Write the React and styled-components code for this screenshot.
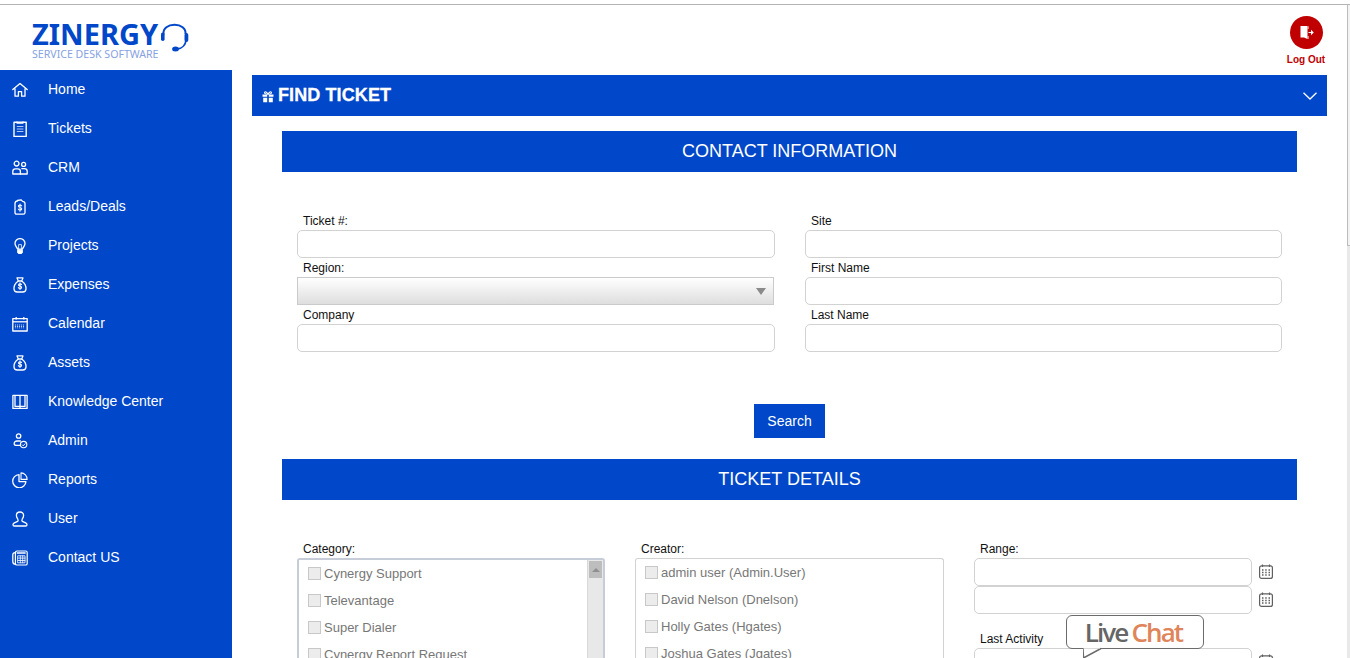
import React from "react";
import styled, { createGlobalStyle } from "styled-components";

const BLUE = "#0047c9";

const Global = createGlobalStyle`
  html, body { margin: 0; padding: 0; background: #fff; overflow: hidden; }
  body { font-family: "Liberation Sans", Arial, sans-serif; }
  * { box-sizing: border-box; }
`;

const Page = styled.div`
  position: relative;
  width: 1350px;
  height: 658px;
  overflow: hidden;
  background: #fff;
  padding-top: 4px;
`;
const TopRule = styled.div`height: 1px; background: #b4b4b4;`;
const ScrollTrack = styled.div`
  position: absolute; right: 0; top: 5px; bottom: 0; width: 3px;
  background: #e9e9e9;
`;
const ScrollThumb = styled.div`
  height: 241px;
  background: #f3f3f3;
  border-left: 1px solid #bcbcbc;
  border-bottom: 1px solid #bcbcbc;
`;
const Header = styled.header`
  height: 65px;
  display: flex;
  justify-content: space-between;
  padding: 0 24px 0 32px;
`;
const Logo = styled.div`
  padding-top: 15px;
  display: flex;
  flex-direction: column;
  width: 160px;
`;
const LogoName = styled.div`
  display: flex; align-items: flex-start; gap: 2px;
  font: 700 29px/28px "Noto Sans", sans-serif;
  color: ${BLUE};
  height: 28px;
`;
const LogoSub = styled.div`
  font: 400 10.6px/12px "Noto Sans", sans-serif;
  color: #86a2e2;
  white-space: nowrap;
`;
const LogoutBox = styled.div`
  width: 40px;
  display: flex; flex-direction: column; align-items: center;
  padding-top: 11px;
  gap: 5px;
  color: #c00000;
  font: 700 10px/12px "Liberation Sans", sans-serif;
  white-space: nowrap;
`;
const LogoutCircle = styled.div`
  width: 33px; height: 33px; border-radius: 50%;
  background: #c00000;
  display: flex; align-items: center; justify-content: center;
`;
const Body = styled.div`display: flex; height: 588px;`;
const Sidebar = styled.nav`
  width: 232px;
  flex: none;
  background: ${BLUE};
`;
const NavItem = styled.div`
  height: 39px;
  display: flex;
  align-items: center;
  padding-left: 12px;
  gap: 20px;
  color: #fff;
  font-size: 14px;
  line-height: 39px;
  svg { flex: none; width: 16px; height: 16px; display: block; }
`;
const Main = styled.main`
  flex: 1;
  padding: 5px 23px 0 20px;
`;
const FindBar = styled.div`
  height: 41px;
  background: ${BLUE};
  color: #fff;
  display: flex;
  align-items: center;
  padding: 0 10px;
  font-size: 18px;
  font-weight: 700;
  gap: 4px;
`;
const FindTitle = styled.span`
  flex: 1;
  letter-spacing: 0.1px;
  -webkit-text-stroke: 0.3px #fff;
`;
const Section = styled.section`margin: 15px 30px 0 30px;`;
const SectionBar = styled.div`
  height: 41px;
  background: ${BLUE};
  color: #fff;
  font-size: 18px;
  line-height: 40px;
  text-align: center;
`;
const FormGrid = styled.div`
  display: grid;
  grid-template-columns: 478px 477px;
  column-gap: 30px;
  padding: 39px 15px 0;
`;
const Field = styled.div`display: flex; flex-direction: column;`;
const Label = styled.label`
  height: 19px;
  padding: 1px 0 0 6px;
  font-size: 12px;
  line-height: 18px;
  color: #111;
  white-space: nowrap;
`;
const Input = styled.div`
  height: 28px;
  flex: none;
  width: ${p => p.$w || "100%"};
  background: #fff;
  border: 1px solid #d2d2d2;
  border-radius: 5px;
`;
const Select = styled.div`
  height: 28px;
  width: 477px;
  border: 1px solid #cacaca;
  background: linear-gradient(#ffffff, #dedede);
  display: flex; align-items: center; justify-content: flex-end;
  padding-right: 7px;
`;
const Caret = styled.div`
  width: 0; height: 0;
  border-left: 5.5px solid transparent;
  border-right: 5.5px solid transparent;
  border-top: 7px solid #8a8a8a;
`;
const Actions = styled.div`display: flex; justify-content: center; padding-top: 52px;`;
const Button = styled.button`
  width: 71px; height: 34px;
  border: 0; padding: 0;
  background: ${BLUE};
  color: #fff;
  font: 400 14px "Liberation Sans", sans-serif;
`;
const DetailSection = styled(Section)`margin-top: 21px;`;
const DetailGrid = styled.div`
  display: grid;
  grid-template-columns: 308px 309px 292px;
  column-gap: 30px;
  padding: 39px 15px 0;
`;
const ListBox = styled.div`
  height: 110px;
  display: flex;
  border: ${p => p.$heavy ? "2px solid #c6ccd8" : "1px solid #d2d2d2"};
  border-bottom: 0;
  border-radius: 3px 3px 0 0;
  background: #fff;
  overflow: hidden;
`;
const ListItems = styled.div`
  flex: 1;
  display: flex;
  flex-direction: column;
  gap: 1px;
  padding-left: 9px;
`;
const ListRow = styled.div`
  height: 26px;
  flex: none;
  display: flex;
  align-items: center;
  gap: 3px;
  font-size: 13px;
  color: #777;
  white-space: nowrap;
`;
const Check = styled.span`
  width: 13px; height: 13px; flex: none;
  background: #ececec;
  border: 1px solid #c8c8c8;
`;
const Track = styled.div`
  width: 16px;
  flex: none;
  background: #e8e8e8;
  border-left: 1px solid #d8d8d8;
  padding: 1px 1px 0 1px;
`;
const Thumb = styled.div`
  height: 17px;
  background: #bdbdbd;
  display: flex; align-items: center; justify-content: center;
  &::before {
    content: "";
    width: 0; height: 0;
    border-left: 4px solid transparent;
    border-right: 4px solid transparent;
    border-bottom: 4px solid #8f8f8f;
  }
`;
const DateRow = styled.div`
  display: flex; align-items: center; gap: 7px;
  svg { flex: none; margin-top: -2px; }
`;
const DateLabel = styled(Label)`margin-top: 15px;`;
const LiveChat = styled.div`
  position: absolute;
  left: 1066px;
  top: 615px;
  width: 138px;
  height: 34px;
  background: #fff;
  border: 1.5px solid #6b6b6b;
  border-radius: 6px;
  display: flex;
  align-items: center;
  justify-content: center;
  padding-right: 3px;
  font: 600 26px/30px "Open Sans", sans-serif;
  letter-spacing: -1.9px;
  color: #666;
`;
const ChatWord = styled.span`color: #e0845a; margin-left: 4px;`;
const Tail = styled.svg`position: absolute; left: 16px; top: 31px;`;

const S = { fill: "none", stroke: "#fff", strokeWidth: 1.3, strokeLinecap: "round", strokeLinejoin: "round" };

const icons = {
  home: <svg viewBox="0 0 16 16" {...S}><path d="M.8 7.6 8 1.6l7.2 6M3 6.400v7.800h3.400V9.600h3.200v4.600H13V6.400" /></svg>,
  tickets: <svg viewBox="0 0 16 16" {...S} strokeLinecap="butt"><rect x="2" y="1.200" width="12.200" height="14.300" strokeWidth="1.400" /><path d="M5 .6v1.400h6V.6" /><path d="M4.800 5.500h6.600M4.800 8h6.600M4.800 10.500h6.600" strokeWidth="1.100" opacity=".7" /></svg>,
  crm: <svg viewBox="0 0 16 16" {...S}><circle cx="4.600" cy="3.600" r="2.400" /><circle cx="11.600" cy="4.400" r="2" /><path d="M.8 14v-2.600c0-1.600 1-2.600 2.600-2.600h2.400c1.600 0 2.600 1 2.600 2.600V14z" /><path d="M9.800 8.600h2.400c1.800 0 3 1 3 2.600V14H8.400" /></svg>,
  leads: <svg viewBox="0 0 16 16" {...S}><path d="M5.400 1.500 9 .8l1.600 1.600c1.600.2 2.400 1 2.400 2.200v9c0 1-.6 1.600-1.600 1.600H4.600c-1 0-1.600-.6-1.600-1.600v-9c0-1.400.8-2.400 2.400-2.600z" strokeWidth="1.300" /><path d="M9.600 6.900C9.300 6.200 8.700 6 8 6c-1 0-1.600.5-1.600 1.200 0 1.700 3.300.9 3.300 2.600 0 .8-.7 1.300-1.700 1.300-.8 0-1.400-.3-1.700-1M8 5v7.200" strokeWidth="1.100" /></svg>,
  bulb: <svg viewBox="0 0 16 16" {...S}><path d="M5.600 11.200C5.400 9.400 3 8.600 3 5.600a5 5 0 0 1 10 0c0 3-2.400 3.800-2.600 5.600z" /><path d="M6.600 11V6.600h2.800V11" strokeWidth=".8" /><path d="M5.800 12.200h4.400v2.200l-1 1H6.800l-1-1z" fill="#fff" /></svg>,
  bag: <svg viewBox="0 0 16 16" {...S}><path d="M5 .9h6L9.800 3.800H6.200zM6 4.100h4" strokeWidth="1.200" /><path d="M6 4.200C3.600 6 1.800 9.200 2 12c.1 1.800 1.400 3 3.200 3h5.600c1.800 0 3.100-1.200 3.200-3 .2-2.800-1.600-6-4-7.800" /><path d="M9.500 7.600C9.200 7 8.700 6.800 8 6.800c-.9 0-1.500.5-1.500 1.100 0 1.600 3.100.8 3.100 2.500 0 .7-.7 1.100-1.600 1.100-.8 0-1.400-.3-1.600-.9M8 5.800v6.700" strokeWidth="1.100" /></svg>,
  calendar: <svg viewBox="0 0 16 16" {...S} strokeLinecap="butt"><rect x=".8" y="2.600" width="14.400" height="12.400" /><path d="M.8 5.800h14.400" /><path d="M4.200 1v2.400M11.800 1v2.400" /><path d="M3.500 8.400v3.800M5.500 8.400v3.800M7.500 8.400v3.800M9.500 8.400v3.800M11.500 8.400v3.800" strokeWidth="1.100" opacity=".75" strokeDasharray="1 .5" /></svg>,
  book: <svg viewBox="0 0 16 16" {...S} strokeLinecap="butt"><path d="M.9 1.400h14.200v13H.9z" /><path d="M3 1.400v11h4.900M13 1.400v11H8.100M8 1.400v13" /></svg>,
  admin: <svg viewBox="0 0 16 16" {...S}><circle cx="6.600" cy="3" r="2.200" /><path d="M8.400 8H5c-1.700 0-2.800 1-2.800 2.400 0 1.200.8 2 2.200 2H8" /><circle cx="11.600" cy="11.600" r="3.200" strokeWidth="1.100" /><path d="m10.200 11.800 1 1 1.800-2" strokeWidth="1" /></svg>,
  pie: <svg viewBox="0 0 16 16" {...S}><path d="M7 2.600a6.600 6.600 0 1 0 6.900 7H7z" /><path d="M9 .9a6.200 6.200 0 0 1 6.100 6.500H9z" strokeWidth="1.100" /></svg>,
  user: <svg viewBox="0 0 16 16" {...S}><path d="M8 1C5.800 1 4.400 2.400 4.400 4.400c0 1.700.8 2.900 1.400 3.800.4.700.4 1.700-.2 2.200l-3.200 1.400C1.400 12.300 1 13 1 13.800c0 .8.600 1.200 1.400 1.200h11.200c.8 0 1.400-.4 1.400-1.200s-.4-1.500-1.400-2l-3.200-1.400c-.6-.5-.6-1.500-.2-2.200.6-.9 1.400-2.100 1.400-3.800C11.600 2.400 10.200 1 8 1z" /></svg>,
  phone: <svg viewBox="0 0 16 16" {...S}><rect x="3.400" y="1" width="11.800" height="14" rx="1.600" strokeWidth="1.200" /><path d="M3.400 2.600C1.400 2.600.800 3.400.800 5v6.400c0 1.800.800 2.800 2.600 2.800" /><path d="M5.200 3h8" strokeWidth="1.300" /><path d="M6 5.800h7v7H6zM8.300 5.800v7M10.700 5.800v7M6 8.100h7M6 10.500h7" strokeWidth=".8" /></svg>,
};

const nav = [
  ["Home", "home"], ["Tickets", "tickets"], ["CRM", "crm"], ["Leads/Deals", "leads"],
  ["Projects", "bulb"], ["Expenses", "bag"], ["Calendar", "calendar"], ["Assets", "bag"],
  ["Knowledge Center", "book"], ["Admin", "admin"], ["Reports", "pie"], ["User", "user"],
  ["Contact US", "phone"],
];

const CalendarIcon = () => (
  <svg width="14" height="15" viewBox="0 0 14 15" fill="none" stroke="#5f5f5f" strokeWidth="1.200">
    <rect x=".6" y="1.800" width="12.800" height="12.600" rx="2" />
    <path d="M3.500.500v2.500M10.500.500v2.500" />
    <path d="M3 6h1.500M6.200 6h1.500M9.500 6H11M3 8.500h1.500M6.200 8.500h1.500M9.500 8.500H11M3 11h1.500M6.200 11h1.500M9.500 11H11" strokeWidth="1.600" />
  </svg>
);

const Headset = () => (
  <svg width="30" height="30" viewBox="0 0 30 30" fill="none" stroke="#0047c9" style={{ marginTop: 3, overflow: "visible" }}>
    <path d="M3.500 11C3 5.500 8 1.800 14.500 1.800S26 5.500 25.500 11" strokeWidth="2" />
    <path d="M26 17c-.3 4.500-3.500 8.500-9 9" strokeWidth="1.800" />
    <rect x="1" y="9.500" width="3.600" height="8.500" rx="1.800" fill="#0047c9" stroke="none" />
    <rect x="24.500" y="10" width="3.800" height="9" rx="1.900" fill="#0047c9" stroke="none" />
    <ellipse cx="15.500" cy="26" rx="3.400" ry="2.500" fill="#0047c9" stroke="none" />
  </svg>
);

const Gift = () => (
  <svg width="12" height="12" viewBox="0 0 12 12" fill="#fff" style={{ marginTop: 2 }}>
    <path d="M.5 3.500h4.700v2.300H.5zM6.800 3.500h4.700v2.300H6.800zM1.200 6.700h4v4.600h-4zM6.800 6.700h4v4.600h-4z" />
    <path d="M6 3.300C4.800.6 3.200.3 2.700 1.200c-.5 1 .8 2.100 3.300 2.100zm0 0c1.200-2.700 2.800-3 3.300-2.100.5 1-.8 2.100-3.300 2.100z" fill="none" stroke="#fff" strokeWidth="1.100" />
  </svg>
);

const categories = ["Cynergy Support", "Televantage", "Super Dialer", "Cynergy Report Request"];
const creators = ["admin user (Admin.User)", "David Nelson (Dnelson)", "Holly Gates (Hgates)", "Joshua Gates (Jgates)"];

export default function App() {
  return (
    <Page>
      <Global />
      <TopRule />
      <Header>
        <Logo>
          <LogoName>ZINERGY<Headset /></LogoName>
          <LogoSub>SERVICE DESK SOFTWARE</LogoSub>
        </Logo>
        <LogoutBox>
          <LogoutCircle>
            <svg width="15" height="15" viewBox="0 0 15 15" fill="#fff">
              <path d="M1.500 1h7v13l-3.500-1.500H1.500z" />
              <path d="M9.500 7h2.500V4.800l2.800 2.700-2.800 2.700V8H9.500z" />
              <path d="M9.500 1v3h-.8V1.800zM8.700 11h.8v3h-.8z" />
            </svg>
          </LogoutCircle>
          Log Out
        </LogoutBox>
      </Header>
      <Body>
        <Sidebar>
          {nav.map(([label, icon]) => (
            <NavItem key={label}>{icons[icon]}<span>{label}</span></NavItem>
          ))}
        </Sidebar>
        <Main>
          <FindBar>
            <Gift />
            <FindTitle>FIND TICKET</FindTitle>
            <svg width="14" height="8" viewBox="0 0 14 8" fill="none" stroke="#fff" strokeWidth="1.300"><path d="M.5.700 7 7 13.500.700" /></svg>
          </FindBar>
          <Section>
            <SectionBar>CONTACT INFORMATION</SectionBar>
            <FormGrid>
              <Field><Label>Ticket #:</Label><Input /></Field>
              <Field><Label>Site</Label><Input /></Field>
              <Field><Label>Region:</Label><Select><Caret /></Select></Field>
              <Field><Label>First Name</Label><Input /></Field>
              <Field><Label>Company</Label><Input /></Field>
              <Field><Label>Last Name</Label><Input /></Field>
            </FormGrid>
            <Actions><Button>Search</Button></Actions>
          </Section>
          <DetailSection>
            <SectionBar>TICKET DETAILS</SectionBar>
            <DetailGrid>
              <Field>
                <Label>Category:</Label>
                <ListBox $heavy>
                  <ListItems>
                    {categories.map(c => <ListRow key={c}><Check />{c}</ListRow>)}
                  </ListItems>
                  <Track><Thumb /></Track>
                </ListBox>
              </Field>
              <Field>
                <Label>Creator:</Label>
                <ListBox>
                  <ListItems>
                    {creators.map(c => <ListRow key={c}><Check />{c}</ListRow>)}
                  </ListItems>
                </ListBox>
              </Field>
              <Field>
                <Label>Range:</Label>
                <DateRow><Input $w="278px" /><CalendarIcon /></DateRow>
                <DateRow><Input $w="278px" /><CalendarIcon /></DateRow>
                <DateLabel>Last Activity</DateLabel>
                <DateRow><Input $w="278px" /><CalendarIcon /></DateRow>
              </Field>
            </DetailGrid>
          </DetailSection>
        </Main>
      </Body>
      <ScrollTrack><ScrollThumb /></ScrollTrack>
      <LiveChat>
        Live<ChatWord>Chat</ChatWord>
        <Tail width="22" height="13" viewBox="0 0 22 13">
          <path d="M0 1.500 .5 11 18 1.500" fill="#fff" stroke="#6b6b6b" strokeWidth="1.500" />
          <path d="M1 0h16v1.500H1z" fill="#fff" />
        </Tail>
      </LiveChat>
    </Page>
  );
}
